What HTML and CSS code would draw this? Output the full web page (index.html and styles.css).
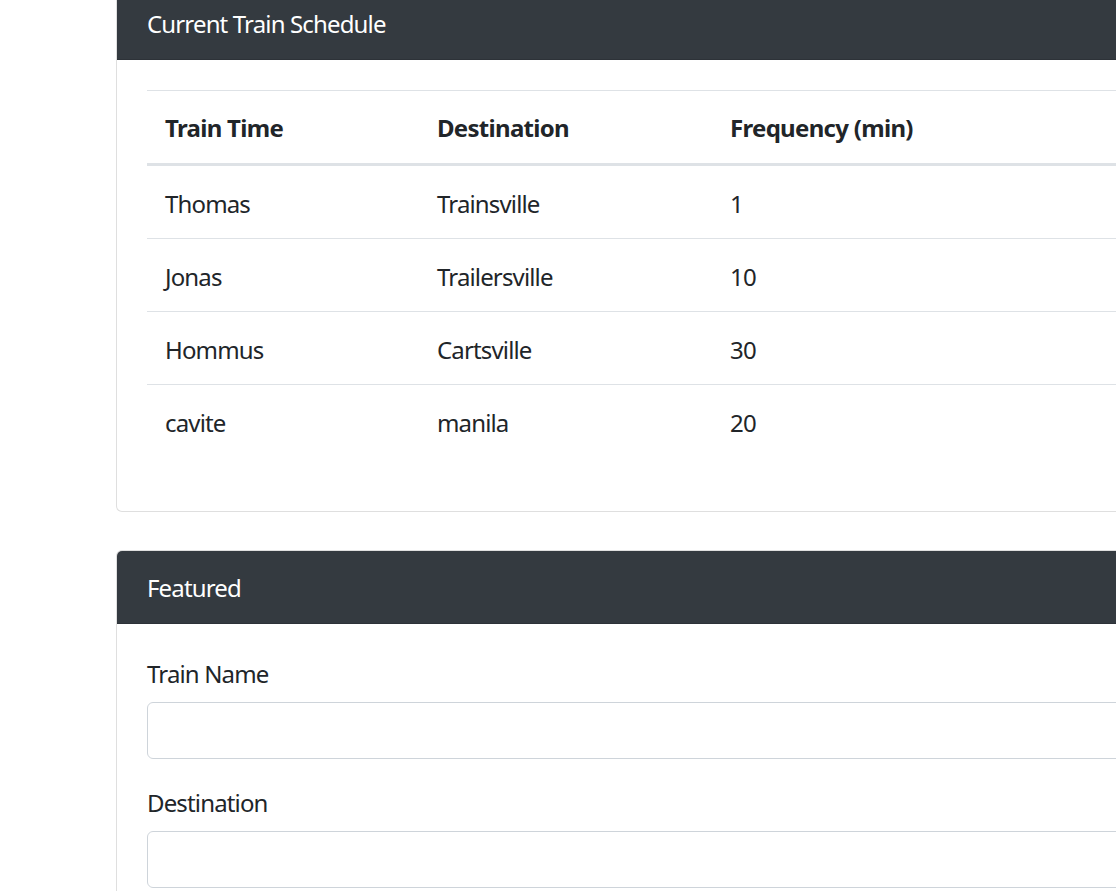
FILE: index.html
```html
<!DOCTYPE html>
<html>
<head>
<meta charset="utf-8">
<link rel="stylesheet" href="styles.css">
</head>
<body>
<div class="page">
  <div class="card card-first">
    <div class="card-header">Current Train Schedule</div>
    <div class="card-body">
      <table class="table">
        <thead>
          <tr>
            <th class="c1">Train Time</th>
            <th class="c2">Destination</th>
            <th>Frequency (min)</th>
          </tr>
        </thead>
        <tbody>
          <tr><td>Thomas</td><td>Trainsville</td><td>1</td></tr>
          <tr><td>Jonas</td><td>Trailersville</td><td>10</td></tr>
          <tr><td>Hommus</td><td>Cartsville</td><td>30</td></tr>
          <tr><td>cavite</td><td>manila</td><td>20</td></tr>
        </tbody>
      </table>
    </div>
  </div>

  <div class="card card-second">
    <div class="card-header">Featured</div>
    <div class="card-body">
      <div class="form-group">
        <label class="label">Train Name</label>
        <input class="form-control" type="text">
      </div>
      <div class="form-group">
        <label class="label">Destination</label>
        <input class="form-control" type="text">
      </div>
    </div>
  </div>
</div>
</body>
</html>
```
FILE: styles.css
```css
html, body {
  margin: 0;
  padding: 0;
  overflow: hidden;
  background: #fff;
}
body {
  font-family: "Segoe UI", "Noto Sans", "Liberation Sans", sans-serif;
  font-size: 24px;
  line-height: 36px;
  letter-spacing: -0.85px;
  color: #212529;
}
.page {
  padding-left: 116px;
  width: 1300px;
}
.card {
  width: 1200px;
  border: 1px solid rgba(0,0,0,.125);
  border-radius: 6px;
  background: #fff;
  overflow: hidden;
}
.card-first {
  margin-top: -14px;
}
.card-second {
  margin-top: 38px;
}
.card-header {
  background: #343a40;
  color: #fff;
  padding: 19px 30px 17px;
  border-bottom: 1px solid rgba(0,0,0,.125);
}
.card-body {
  padding: 30px;
}
.table {
  width: 100%;
  border-collapse: collapse;
  margin-bottom: 24px;
}
.table th,
.table td {
  text-align: left;
  padding: 20px 18px 16px;
  border-top: 1px solid #dee2e6;
  vertical-align: top;
}
.table th {
  font-weight: 700;
  letter-spacing: -0.7px;
  padding: 19px 18px 17px;
  border-bottom: 3px solid #dee2e6;
}
.c1 { width: 236px; }
.c2 { width: 257px; }
.form-group {
  margin-bottom: 24px;
}
.label {
  display: block;
  padding-top: 2px;
  margin-bottom: 10px;
}
.form-control {
  display: block;
  box-sizing: border-box;
  width: 100%;
  height: 57px;
  padding: 9px 18px;
  font: inherit;
  border: 1.5px solid #ced4da;
  border-radius: 6px;
  background: #fff;
}
```
